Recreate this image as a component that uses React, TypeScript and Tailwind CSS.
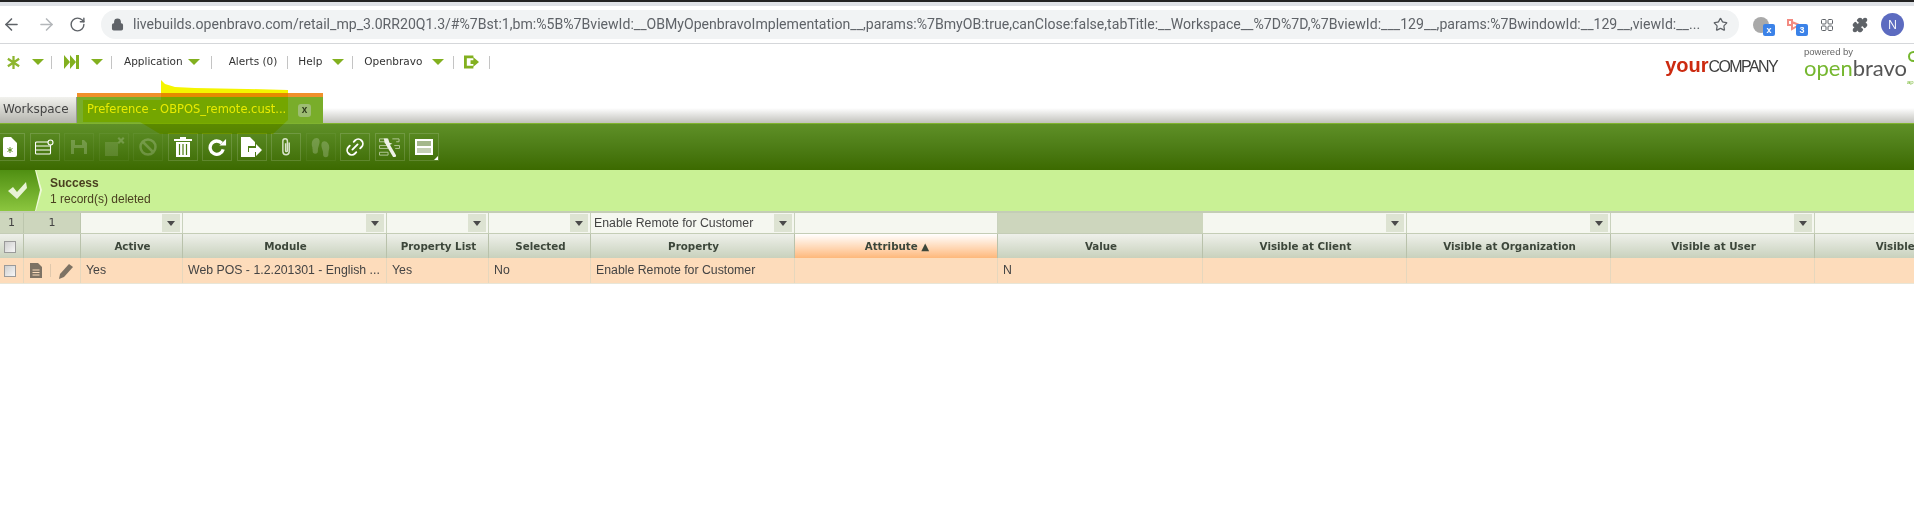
import React from 'react';
import { ArrowLeft, ArrowRight, RotateCw, Lock, Star, Puzzle, Footprints, Link2 } from 'lucide-react';

const GRID_COLS =
  'grid grid-cols-[24px_57px_102px_204px_102px_102px_204px_203px_205px_204px_204px_204px_204px] w-[2015px]';

const URL_TEXT =
  'livebuilds.openbravo.com/retail_mp_3.0RR20Q1.3/#%7Bst:1,bm:%5B%7BviewId:__OBMyOpenbravoImplementation__,params:%7BmyOB:true,canClose:false,tabTitle:__Workspace__%7D%7D,%7BviewId:___129__,params:%7BwindowId:__129__,viewId:__...';

function Caret() {
  return <span className="block w-0 h-0 border-x-[6px] border-x-transparent border-t-[6px] border-t-[#82b01f]" />;
}

function Sep() {
  return <span className="block w-px h-[13px] bg-[#c4c4c4]" />;
}

function ChromeBar() {
  return (
    <div className="h-[44px] shrink-0 flex flex-col">
      <div className="h-[2px] bg-[#222]" />
      <div className="h-[4px] bg-[#dee1e6]" />
      <div className="flex-1 flex items-center border-b border-[#d5d7da] bg-white relative">
        <ArrowLeft size={19} strokeWidth={2} className="ml-[2px] text-[#5f6368]" />
        <ArrowRight size={19} strokeWidth={2} className="ml-[16px] text-[#b4b7ba]" />
        <RotateCw size={17} strokeWidth={2} className="ml-[13px] text-[#5f6368]" />
        <div className="ml-[15px] w-[1638px] h-[29px] rounded-full bg-[#f1f3f4] flex items-center pl-[10px] relative">
          <Lock size={13} strokeWidth={2.5} className="text-[#5f6368]" fill="#5f6368" />
          <span className="ml-[9px] w-[1575px] overflow-hidden whitespace-nowrap text-[14.1px] text-[#5f6368] font-['Roboto',sans-serif]">
            {URL_TEXT}
          </span>
          <Star size={15} strokeWidth={2} className="absolute left-[1612px] text-[#5f6368]" />
        </div>
        <div className="ml-[14px] flex items-center">
          <div className="relative w-[16px] h-[16px] rounded-full bg-[#a9a9a9]">
            <span className="absolute left-[10px] top-[7px] w-[12px] h-[12px] rounded-[2px] bg-[#3b82e8] text-white text-[9px] leading-[12px] text-center font-bold font-['Liberation_Sans',sans-serif]">x</span>
          </div>
          <div className="relative ml-[17px] w-[16px] h-[16px]">
            <svg viewBox="0 0 16 16" width="16" height="16" fill="none" stroke="#f28b82" strokeWidth="2">
              <path d="M2 3h4v5H2zM6 5l7 3-7 4z" />
            </svg>
            <span className="absolute left-[10px] top-[7px] w-[12px] h-[12px] rounded-[2px] bg-[#3b82e8] text-white text-[9px] leading-[12px] text-center font-bold font-['Liberation_Sans',sans-serif]">3</span>
          </div>
          <svg viewBox="0 0 12 12" width="12" height="12" fill="none" stroke="#5f6368" strokeWidth="1" className="ml-[19px]">
            <rect x="0.5" y="0.5" width="4.5" height="4.5" rx="1" />
            <rect x="7" y="0.5" width="4.5" height="4.5" rx="1" />
            <rect x="0.5" y="7" width="4.5" height="4.5" rx="1" />
            <rect x="7" y="7" width="4.5" height="4.5" rx="1" />
          </svg>
          <Puzzle size={16} className="ml-[19px] text-[#5f6368]" fill="#5f6368" />
          <span className="ml-[13px] w-[23px] h-[23px] rounded-full bg-[#5c6bc0] text-white text-[12px] leading-[23px] text-center font-['Open_Sans',sans-serif]">N</span>
        </div>
      </div>
    </div>
  );
}

function NavBar() {
  const navText = "text-[10.5px] text-[#333] font-['DejaVu_Sans',sans-serif] whitespace-nowrap";
  return (
    <div className="h-[49px] shrink-0 bg-white relative flex items-start">
      <div className="flex items-center h-[36px]">
        <svg viewBox="0 0 16 16" width="15" height="15" className="ml-[6px]" stroke="#8db52e" strokeWidth="2.4" fill="none">
          <path d="M8 1v14M2 4l12 8M14 4L2 12" />
        </svg>
        <span className="ml-[11px]"><Caret /></span>
        <span className="ml-[7px]"><Sep /></span>
        <svg viewBox="0 0 16 14" width="16" height="14" className="ml-[12px]" fill="#82b01f">
          <path d="M0 0l6 7-6 7zM6 0l6 7-6 7zM12 0h3v14h-3z" />
        </svg>
        <span className="ml-[11px]"><Caret /></span>
        <span className="ml-[8px]"><Sep /></span>
        <span className={`${navText} ml-[12px]`}>Application</span>
        <span className="ml-[5px]"><Caret /></span>
        <span className="ml-[11px]"><Sep /></span>
        <span className={`${navText} ml-[17px]`}>Alerts (0)</span>
        <span className="ml-[10px]"><Sep /></span>
        <span className={`${navText} ml-[10px]`}>Help</span>
        <span className="ml-[10px]"><Caret /></span>
        <span className="ml-[8px]"><Sep /></span>
        <span className={`${navText} ml-[11px]`}>Openbravo</span>
        <span className="ml-[10px]"><Caret /></span>
        <span className="ml-[9px]"><Sep /></span>
        <svg viewBox="0 0 16 14" width="15" height="14" className="ml-[10px]" fill="#82b01f">
          <path d="M0 0h10v3H3v8h7v3H0zM7 5h3V2l6 5-6 5V9H7z" />
        </svg>
        <span className="ml-[10px]"><Sep /></span>
      </div>
      <div className="ml-auto flex items-start h-full">
        <div className="mt-[11px] flex items-baseline whitespace-nowrap leading-[20px] font-['Liberation_Sans',sans-serif]">
          <span className="font-bold text-[20px] text-[#cc2a10]">your</span>
          <span className="text-[16px] tracking-[-0.1em] text-[#3e3e3e]">COMPANY</span>
        </div>
        <div className="ml-[27px] w-[110px] relative h-full overflow-hidden">
          <div className="absolute left-0 top-[3px] text-[9.5px] leading-[10px] text-[#666] font-['Liberation_Sans',sans-serif] whitespace-nowrap">powered by</div>
          <div className="absolute left-0 top-[13px] text-[22px] leading-[22px] font-['Lato',sans-serif] whitespace-nowrap">
            <span className="text-[#75b72f]">open</span><span className="text-[#555]">bravo</span>
          </div>
          <span className="absolute left-[104px] top-[7px] w-[11px] h-[11px] rounded-full border-2 border-[#75b72f]" />
          <span className="absolute left-[103px] top-[35px] text-[6px] leading-[6px] text-[#75b72f] font-['Liberation_Sans',sans-serif]">ap</span>
        </div>
      </div>
    </div>
  );
}

function TabBar() {
  return (
    <div className="h-[30px] shrink-0 flex items-end bg-gradient-to-b from-white via-white to-[#c2c2bc]">
      <div className="w-[77px] h-[26px] bg-gradient-to-b from-[#f2f2ee] to-[#b5b5ae] border-r border-[#999] pl-[3px] text-[12px] leading-[24px] text-[#444] font-['DejaVu_Sans',sans-serif] whitespace-nowrap">
        Workspace
      </div>
      <div className="w-[246px] h-[30px] border-t-4 border-[#f0902b] bg-[#79ad2a] flex items-center">
        <span className="ml-[10px] w-[203px] text-[11.5px] text-[#f2f500] font-['DejaVu_Sans',sans-serif] whitespace-nowrap">
          Preference - OBPOS_remote.cust...
        </span>
        <span className="ml-[8px] w-[13px] h-[13px] rounded-[3px] bg-[#9dbd73] text-[10px] leading-[12px] text-center text-[#2d3a1a] font-bold font-['Liberation_Sans',sans-serif]">x</span>
      </div>
    </div>
  );
}

function ToolButton({ children, disabled }: { children: React.ReactNode; disabled?: boolean }) {
  return (
    <div className={`w-[30px] h-[28px] shrink-0 flex items-center justify-center border ${disabled ? 'border-white/5' : 'border-white/15'} relative`}>
      <div className={disabled ? 'opacity-20' : ''}>{children}</div>
    </div>
  );
}

function Toolbar() {
  return (
    <div className="h-[47px] shrink-0 bg-gradient-to-b from-[#5f9027] to-[#3c6a00] border-t border-[#80b32f] pt-[9px]">
      <div className="flex gap-[4.5px] -ml-[5px]">
        <ToolButton>
          <svg viewBox="0 0 14 20" width="14" height="20">
            <path d="M0 2a2 2 0 012-2h6l6 6v12a2 2 0 01-2 2H2a2 2 0 01-2-2z" fill="#fff" />
            <path d="M7 10v6M4.5 11.5l5 3M9.500 11.500l-5 3" stroke="#5f9027" strokeWidth="1" />
          </svg>
        </ToolButton>
        <ToolButton>
          <svg viewBox="0 0 20 16" width="20" height="16" fill="none" stroke="#fff" strokeWidth="1.1">
            <rect x="0.500" y="3" width="15" height="12" rx="1" />
            <path d="M0.500 7h15M0.500 11h15" />
            <circle cx="15.500" cy="3.500" r="2.500" fill="#5f9027" />
          </svg>
        </ToolButton>
        <ToolButton disabled>
          <svg viewBox="0 0 16 16" width="16" height="16" fill="#fff">
            <path d="M0 1h13l3 3v11H0zM4 1v5h7V1zM3 9v6h10V9z" fillRule="evenodd" />
          </svg>
        </ToolButton>
        <ToolButton disabled>
          <svg viewBox="0 0 22 20" width="22" height="20" fill="#fff">
            <path d="M2 5h13v14H2z" opacity="0.6" />
            <path d="M16 0l2 2 2-2 1.500 1.500-2 2 2 2L20 7l-2-2-2 2-1.500-1.500 2-2-2-2z" />
          </svg>
        </ToolButton>
        <ToolButton disabled>
          <svg viewBox="0 0 18 18" width="18" height="18" fill="none" stroke="#fff" strokeWidth="2.500">
            <circle cx="9" cy="9" r="7.500" />
            <path d="M4 4l10 10" />
          </svg>
        </ToolButton>
        <ToolButton>
          <svg viewBox="0 0 18 20" width="18" height="20" fill="#fff">
            <path d="M0 2h18v2H0zM6 0h6v2H6z" />
            <path d="M2 5h14v15H2z" />
            <path d="M5.500 7v11M9 7v11M12.500 7v11" stroke="#4c7d12" strokeWidth="1.200" />
          </svg>
        </ToolButton>
        <ToolButton>
          <svg viewBox="0 0 20 20" width="19" height="19" fill="none" stroke="#fff" strokeWidth="3.500">
            <path d="M16 12a7 7 0 11-1.500-6.500" />
            <path d="M19 1v7h-7z" fill="#fff" stroke="none" />
          </svg>
        </ToolButton>
        <ToolButton>
          <svg viewBox="0 0 21 20" width="21" height="20" fill="#fff">
            <path d="M0 0h9l5 5v4H7v6h7v5H0z" />
            <path d="M8 11h7V7l6 6-6 6v-4H8z" />
          </svg>
        </ToolButton>
        <ToolButton>
          <svg viewBox="0 0 14 22" width="13" height="20" fill="none" stroke="#d9e4ca" strokeWidth="1.600">
            <path d="M10 6v10a3.500 3.500 0 01-7 0V4.500a2.500 2.500 0 015 0V15a1 1 0 01-2 0V7" />
          </svg>
        </ToolButton>
        <ToolButton disabled>
          <Footprints size={21} className="text-white" fill="#fff" />
        </ToolButton>
        <ToolButton>
          <Link2 size={22} strokeWidth={2} className="text-white -rotate-45" />
        </ToolButton>
        <ToolButton>
          <svg viewBox="0 0 22 20" width="21" height="20" fill="none">
            <path d="M0.500 1.500h8v3h-8zM0.500 8.500h9v3h-9zM0.500 15.500h9v3h-9zM14 1.500h7v3h-3M16 8.500h5.500v3H17" stroke="#b4c89a" strokeWidth="1" />
            <path d="M9 7l7 12" stroke="#eef2e6" strokeWidth="3.600" strokeLinecap="round" />
            <path d="M5 1l1 5 3.500 2.500 4.500-2L11 5.500 9.500 1z" fill="#eef2e6" />
          </svg>
        </ToolButton>
        <ToolButton>
          <svg viewBox="0 0 18 16" width="18" height="16">
            <rect x="0" y="0" width="18" height="16" fill="#fff" />
            <rect x="2" y="2" width="14" height="5" fill="#a4b78c" />
            <rect x="2" y="9" width="14" height="5" fill="#c4cfb4" />
          </svg>
          <span className="absolute right-0 bottom-0 w-0 h-0 border-l-[4px] border-l-transparent border-b-[4px] border-b-white" />
        </ToolButton>
      </div>
    </div>
  );
}

function MessageBar() {
  return (
    <div className="h-[41px] shrink-0 bg-[#c9f195] flex items-center relative">
      <svg viewBox="0 0 42 41" width="42" height="41" className="shrink-0">
        <defs>
          <linearGradient id="msgFill" x1="0" y1="0" x2="0" y2="1">
            <stop offset="0" stopColor="#4f8f12" />
            <stop offset="1" stopColor="#8cc63f" />
          </linearGradient>
        </defs>
        <path d="M0 0h36l6 20-6 21H0z" fill="#eef9d8" />
        <path d="M0 0h35l5 20-5 21H0z" fill="url(#msgFill)" />
        <path d="M8 21l5-4 4 5 9-10 1 6-10 11z" fill="#e8f3d5" />
      </svg>
      <div className="ml-[8px] text-[12px] leading-[16px] text-[#4a4020] font-['Liberation_Sans',sans-serif]">
        <div className="font-bold">Success</div>
        <div>1 record(s) deleted</div>
      </div>
    </div>
  );
}

function FilterCell({ text, noButton }: { text?: string; noButton?: boolean }) {
  return (
    <div className="h-[20px] bg-[#f5f7f0] border-r border-[#c9d2bd] flex items-center relative text-[12.3px] text-[#444] font-['Liberation_Sans',sans-serif]">
      <span className="pl-[3px] whitespace-nowrap">{text}</span>
      {!noButton && (
        <span className="absolute right-[2px] top-[1px] w-[18px] h-[18px] bg-[#dde3d2] flex items-center justify-center">
          <span className="block w-0 h-0 border-x-[4px] border-x-transparent border-t-[5px] border-t-[#4a4a4a]" />
        </span>
      )}
    </div>
  );
}

function FilterRow() {
  const countCell = "h-[20px] bg-[#cdd6bd] border-r border-[#bcc6ad] text-[11px] leading-[20px] text-center text-[#444] font-['DejaVu_Sans',sans-serif]";
  return (
    <div className={`${GRID_COLS} bg-[#cdd6bd] border-t-2 border-[#a9b19c] border-b border-[#c4cdb6]`}>
      <div className={countCell}>1</div>
      <div className={countCell}>1</div>
      <FilterCell />
      <FilterCell />
      <FilterCell />
      <FilterCell />
      <FilterCell text="Enable Remote for Customer" />
      <FilterCell noButton />
      <div className="h-[20px] bg-[#cdd6bd]" />
      <FilterCell />
      <FilterCell />
      <FilterCell />
      <FilterCell />
    </div>
  );
}

function Checkbox() {
  return (
    <span className="block w-[12px] h-[12px] bg-gradient-to-br from-[#cfcfcf] to-[#f7f7f7] border border-[#9a9a9a]" />
  );
}

function HeaderRow() {
  const cols = ['Active', 'Module', 'Property List', 'Selected', 'Property', 'Attribute ▲', 'Value', 'Visible at Client', 'Visible at Organization', 'Visible at User', 'Visible at Role'];
  return (
    <div className={`${GRID_COLS} h-[24px] border-b border-[#b9c2ab]`}>
      <div className="bg-gradient-to-b from-[#eef0ea] to-[#c7d0bb] border-r border-[#b9c2ab] flex items-center justify-center pr-[3px]">
        <Checkbox />
      </div>
      <div className="bg-gradient-to-b from-[#eef0ea] to-[#c7d0bb] border-r border-[#b9c2ab]" />
      {cols.map((title) => (
        <div
          key={title}
          className={`${title.startsWith('Attribute') ? 'bg-gradient-to-b from-white to-[#fdb574]' : 'bg-gradient-to-b from-[#eef0ea] to-[#c7d0bb]'} border-r border-[#b9c2ab] pl-[2px] text-center text-[10.3px] leading-[25px] font-bold text-[#3c463a] font-['DejaVu_Sans',sans-serif] whitespace-nowrap`}
        >
          {title}
        </div>
      ))}
    </div>
  );
}

function DataRow() {
  const cell = "border-r border-[#e6d7bd] pl-[5px] text-[12.3px] leading-[25px] text-[#444] font-['Liberation_Sans',sans-serif] whitespace-nowrap overflow-hidden";
  const values = ['Yes', 'Web POS - 1.2.201301 - English ...', 'Yes', 'No', 'Enable Remote for Customer', '', 'N', '', '', '', ''];
  return (
    <div className={`${GRID_COLS} h-[26px] bg-[#fddcbb] border-b border-[#e8e6d8]`}>
      <div className="border-r border-[#e6d7bd] flex items-center justify-center pr-[3px]">
        <Checkbox />
      </div>
      <div className="border-r border-[#e6d7bd] flex items-center pl-[6px]">
        <svg viewBox="0 0 12 15" width="12" height="15" fill="#7d7264">
          <path d="M0 0h8l4 4v11H0z" />
          <path d="M2.500 7h7M2.500 9.500h7M2.500 12h7" stroke="#fddcbb" strokeWidth="1" />
        </svg>
        <span className="ml-[8px] w-px h-[13px] bg-[#e0c8ac]" />
        <svg viewBox="0 0 16 16" width="16" height="16" className="ml-[7px]" fill="#7d7264">
          <path d="M11 1l4 3-9 10-5 2 1-5z" />
        </svg>
      </div>
      {values.map((value, i) => (
        <div key={i} className={cell}>{value}</div>
      ))}
    </div>
  );
}

function Highlight() {
  return (
    <svg width="300" height="140" className="absolute left-0 top-0 pointer-events-none mix-blend-multiply">
      <path
        d="M161 80l4 4 10 3 20 1 52 1 41 1v30l-15 14H160l-20-12H83v-22h78z"
        fill="#f5f500"
      />
    </svg>
  );
}

export default function App() {
  return (
    <div className="w-[1914px] h-[524px] bg-white overflow-hidden relative flex flex-col blur-[0.4px]">
      <ChromeBar />
      <NavBar />
      <TabBar />
      <Toolbar />
      <MessageBar />
      <FilterRow />
      <HeaderRow />
      <DataRow />
      <Highlight />
    </div>
  );
}
